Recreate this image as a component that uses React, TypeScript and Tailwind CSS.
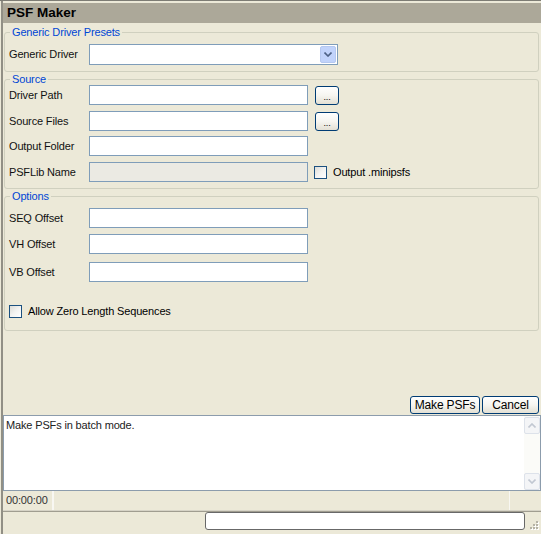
import React from "react";

function XPButton({ children, className }: { children: React.ReactNode; className: string }) {
  return (
    <div
      className={
        "flex items-center justify-center rounded-[3px] border border-[#003c74] bg-gradient-to-b from-[#ffffff] via-[#f6f5f0] to-[#e3e0d4] text-black " +
        className
      }
    >
      {children}
    </div>
  );
}

function Checkbox() {
  return (
    <div className="w-[13px] h-[13px] border border-[#1c5180] bg-gradient-to-br from-[#dcdcd7] via-[#f3f3f1] to-white shrink-0" />
  );
}

function TextBox({ disabled }: { disabled?: boolean }) {
  return (
    <div
      className={
        "w-[219px] h-[20px] border border-[#7f9db9] " + (disabled ? "bg-[#ebeae3]" : "bg-white")
      }
    />
  );
}

function Group({
  title,
  className,
  children,
}: {
  title: string;
  className: string;
  children: React.ReactNode;
}) {
  return (
    <div className={"relative ml-[1px] mr-[2px] border border-[#d0d0bf] rounded-[3px] " + className}>
      <span className="absolute left-[5px] -top-[8px] px-[2px] bg-[#ece9d8] text-[#0046d5] leading-[14px]">
        {title}
      </span>
      {children}
    </div>
  );
}

function Row({ label, children, className }: { label: string; children: React.ReactNode; className?: string }) {
  return (
    <div className={"flex items-center " + (className || "")}>
      <div className="w-[80px] shrink-0 text-[#111]">{label}</div>
      {children}
    </div>
  );
}

function Chevron({ color, up }: { color: string; up?: boolean }) {
  return (
    <svg width="8" height="5" viewBox="0 0 8 5">
      <path
        d={up ? "M0.5 4.5 L4 1 L7.5 4.5" : "M0.5 0.5 L4 4 L7.5 0.5"}
        fill="none"
        stroke={color}
        strokeWidth="1.6"
      />
    </svg>
  );
}

export default function App() {
  return (
    <div className="w-[541px] h-[534px] bg-[#ece9d8] flex flex-col font-['Liberation_Sans',Arial,sans-serif] text-[11px] tracking-[-0.15px] text-black overflow-hidden border-t border-[#7d7c74] pl-[1px]">
      <div className="flex-1 flex flex-col border-l-2 border-[#918f85] pt-[2px]">
        {/* Header */}
        <div className="h-[20px] bg-[#aca899] flex items-center pl-[4px] text-[13.5px] tracking-normal font-bold">PSF Maker</div>

        {/* Generic Driver Presets */}
        <Group title="Generic Driver Presets" className="mt-[9px] pt-[11px] pb-[6px] pl-[4px]">
          <Row label="Generic Driver">
            <div className="w-[249px] h-[21px] border border-[#7f9db9] bg-white flex justify-end items-center pr-[1px]">
              <div className="w-[16px] h-[17px] rounded-[2px] bg-[#c1d3fb] border border-[#b5c8f0] flex items-center justify-center">
                <Chevron color="#4d6185" />
              </div>
            </div>
          </Row>
        </Group>

        {/* Source */}
        <Group title="Source" className="mt-[7px] pt-[5px] pb-[6px] pl-[4px]">
          <Row label="Driver Path">
            <TextBox />
            <XPButton className="ml-[7px] w-[24px] h-[19px] text-[9px] leading-none pt-[4px]">...</XPButton>
          </Row>
          <Row label="Source Files" className="mt-[6px]">
            <TextBox />
            <XPButton className="ml-[7px] w-[24px] h-[19px] text-[9px] leading-none pt-[4px]">...</XPButton>
          </Row>
          <Row label="Output Folder" className="mt-[5px]">
            <TextBox />
          </Row>
          <Row label="PSFLib Name" className="mt-[6px]">
            <TextBox disabled />
            <div className="ml-[6px] flex items-center gap-[6px]">
              <Checkbox />
              <span>Output .minipsfs</span>
            </div>
          </Row>
        </Group>

        {/* Options */}
        <Group title="Options" className="mt-[7px] pt-[11px] pb-[10px] pl-[4px]">
          <Row label="SEQ Offset">
            <TextBox />
          </Row>
          <Row label="VH Offset" className="mt-[6px]">
            <TextBox />
          </Row>
          <Row label="VB Offset" className="mt-[8px]">
            <TextBox />
          </Row>
          <div className="mt-[21px] flex items-center gap-[6px]">
            <Checkbox />
            <span>Allow Zero Length Sequences</span>
          </div>
        </Group>

        <div className="flex-1" />

        {/* Action buttons */}
        <div className="flex justify-end gap-[2px] pr-[2px]">
          <XPButton className="w-[70px] h-[18px] text-[12px]">Make PSFs</XPButton>
          <XPButton className="w-[57px] h-[18px] text-[12px]">Cancel</XPButton>
        </div>

        {/* Log */}
        <div className="mt-[1px] h-[76px] border border-[#8c9cac] bg-white flex">
          <div className="flex-1 pl-[2px] pt-[1px] text-[11px] text-[#222]">Make PSFs in batch mode.</div>
          <div className="w-[16px] flex flex-col justify-between bg-[#fbfbf8] pt-[1px] pb-[0px]">
            <div className="h-[17px] rounded-[2px] border border-[#dde2ea] bg-[#f4f5f7] flex items-center justify-center">
              <Chevron color="#c2c8d2" up />
            </div>
            <div className="h-[17px] rounded-[2px] border border-[#dde2ea] bg-[#f4f5f7] flex items-center justify-center">
              <Chevron color="#c2c8d2" />
            </div>
          </div>
        </div>

        {/* Status bar */}
        <div className="h-[20px] flex border-b border-[#d6d3c6]">
          <div className="w-[51px] flex items-center pl-[3px] text-[11px] text-[#333] border-r-2 border-[#f8f7f2]">00:00:00</div>
          <div className="flex-1 border-r border-[#f8f7f2]" />
          <div className="w-[31px]" />
        </div>

        {/* Bottom strip */}
        <div className="h-[23px] border-t border-[#a09d90] flex items-start relative">
          <div className="ml-[202px] w-[320px] h-[18px] rounded-[3px] border border-[#686868] bg-white" />
          <svg className="absolute right-[2px] bottom-[2px]" width="11" height="11" viewBox="0 0 11 11">
            {[
              [8, 0],
              [5, 3],
              [8, 3],
              [2, 6],
              [5, 6],
              [8, 6],
            ].map(([x, y], i) => (
              <g key={i}>
                <rect x={x + 1} y={y + 1} width="2" height="2" fill="#ffffff" />
                <rect x={x} y={y} width="2" height="2" fill="#b6b3a6" />
              </g>
            ))}
          </svg>
        </div>
      </div>
    </div>
  );
}
